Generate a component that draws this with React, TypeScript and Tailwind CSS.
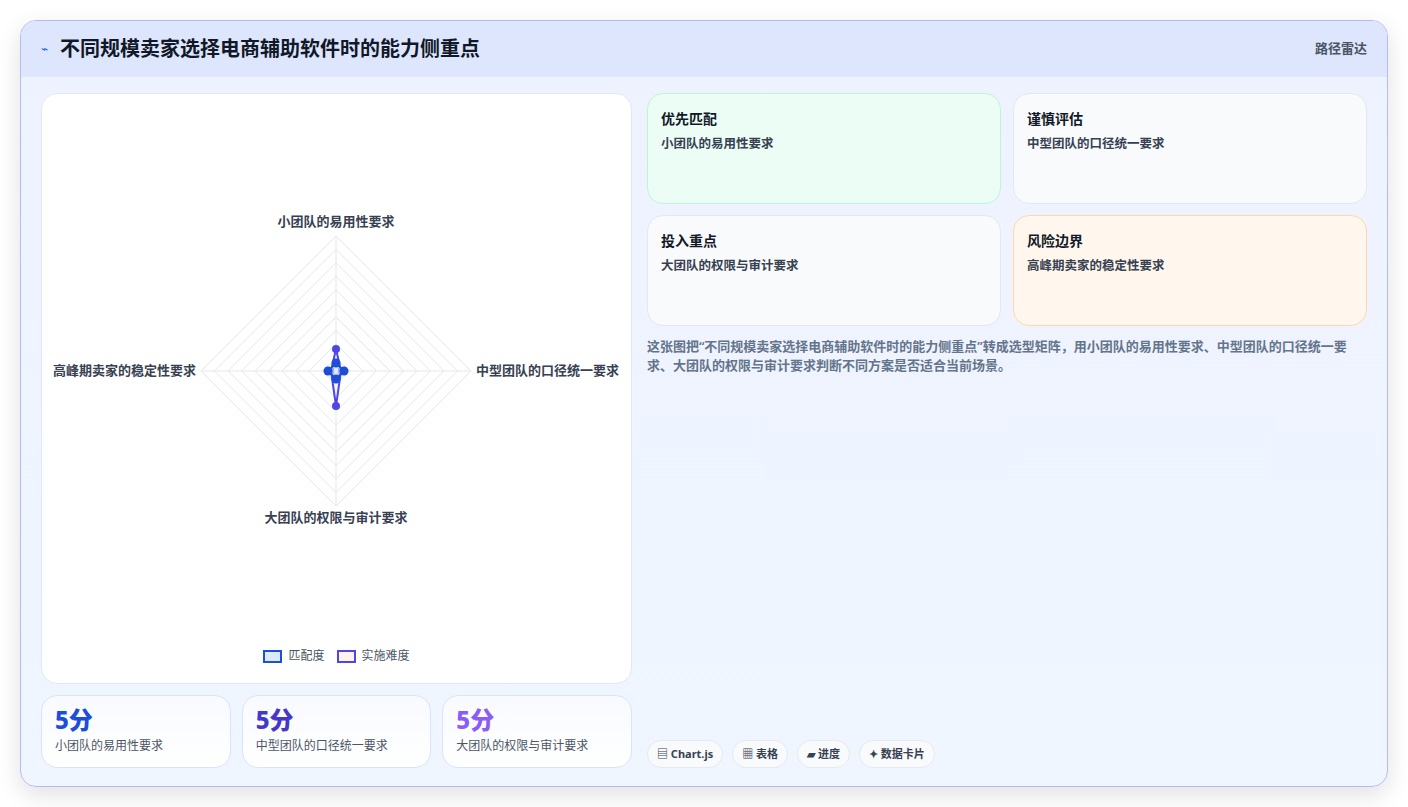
import React from "react";

const F = { fontFamily: '"Noto Sans", "Noto Sans CJK SC", sans-serif' };

function Radar() {
  const cx = 294, cy = 262, R = 135;
  const rings = Array.from({ length: 10 }, (_, i) => ((i + 1) / 10) * R);
  const dia = (r: number) => `${cx},${cy - r} ${cx + r},${cy} ${cx},${cy + r} ${cx - r},${cy}`;
  const purple = [22, 5, 35, 5];
  const blue = [8, 8, 8, 8];
  const pts = (v: number[]) => [[cx, cy - v[0]], [cx + v[1], cy], [cx, cy + v[2]], [cx - v[3], cy]];
  return (
    <svg width="590" height="525" className="block">
      {rings.map((r, i) => (
        <polygon key={i} points={dia(r)} fill="none" stroke="#e5e7eb" strokeWidth="1" />
      ))}
      <line x1={cx} y1={cy - R} x2={cx} y2={cy + R} stroke="#e5e7eb" />
      <line x1={cx - R} y1={cy} x2={cx + R} y2={cy} stroke="#e5e7eb" />
      <polygon points={pts(purple).map(p => p.join(",")).join(" ")} fill="rgba(253,237,230,0.5)" stroke="#4f46e5" strokeWidth="2" />
      {pts(purple).map((p, i) => <circle key={i} cx={p[0]} cy={p[1]} r="4" fill="#4f46e5" />)}
      <polygon points={pts(blue).map(p => p.join(",")).join(" ")} fill="rgba(219,234,254,0.6)" stroke="#1d4ed8" strokeWidth="2" />
      {pts(blue).map((p, i) => <circle key={i} cx={p[0]} cy={p[1]} r="4.5" fill="#1d4ed8" />)}
      <rect x={cx - 2} y={cy - 2} width="4" height="4" fill="#dbeafe" />
      <g fontSize="13" fontWeight="600" fill="#374151" style={F}>
        <text x={cx} y={cy - R - 14} textAnchor="middle" dominantBaseline="middle">小团队的易用性要求</text>
        <text x={cx} y={cy + R + 12} textAnchor="middle" dominantBaseline="middle">大团队的权限与审计要求</text>
        <text x={cx - R - 5} y={cy} textAnchor="end" dominantBaseline="middle">高峰期卖家的稳定性要求</text>
        <text x={cx + R + 5} y={cy} textAnchor="start" dominantBaseline="middle">中型团队的口径统一要求</text>
      </g>
    </svg>
  );
}

const cards = [
  { t: "优先匹配", d: "小团队的易用性要求", c: "bg-[#ecfdf5] border-[#bbf7d0]" },
  { t: "谨慎评估", d: "中型团队的口径统一要求", c: "bg-[#f8fafc] border-[#e2e8f0]" },
  { t: "投入重点", d: "大团队的权限与审计要求", c: "bg-[#f8fafc] border-[#e2e8f0]" },
  { t: "风险边界", d: "高峰期卖家的稳定性要求", c: "bg-[#fff7ed] border-[#fed7aa]" },
];

const stats = [
  { c: "text-[#1d4ed8]", d: "小团队的易用性要求" },
  { c: "text-[#4338ca]", d: "中型团队的口径统一要求" },
  { c: "text-[#8b5cf6]", d: "大团队的权限与审计要求" },
];

export default function App() {
  return (
    <div className="w-[1408px] h-[807px] bg-white p-5" style={F}>
      <div className="h-[767px] rounded-2xl border border-[#b4bdf0] bg-gradient-to-b from-[#eef2ff] to-[#eff6ff] shadow-[0_8px_24px_rgba(0,0,0,0.12)] overflow-hidden flex flex-col">
        <div className="h-[56px] shrink-0 bg-[#dde6fd] flex items-center justify-between pl-5 pr-5">
          <div className="flex items-center gap-3">
            <span className="text-[#2563eb] text-xs">⌁</span>
            <span className="text-[20px] font-bold text-[#111827]">不同规模卖家选择电商辅助软件时的能力侧重点</span>
          </div>
          <span className="text-[13px] font-semibold text-[#4b5563]">路径雷达</span>
        </div>
        <div className="flex-1 flex gap-[15px] px-5 pt-[16px] pb-[18px]">
          <div className="w-[591px] flex flex-col gap-[11px]">
            <div className="h-[591px] bg-white rounded-2xl border border-[#e0e7f5] flex flex-col">
              <div className="pt-[15px]"><Radar /></div>
              <div className="flex-1 flex items-start justify-center gap-2 text-[12px] text-[#4b5563] pt-[13px]">
                <span className="flex items-center gap-1.5"><span className="w-[19px] h-[13px] border-2 border-[#1d4ed8] bg-[#dbeafe]" />匹配度</span>
                <span className="flex items-center gap-1.5 ml-1"><span className="w-[19px] h-[13px] border-2 border-[#4f46e5] bg-[#fdf2ee]" />实施难度</span>
              </div>
            </div>
            <div className="grid grid-cols-3 gap-[11px] h-[73px]">
              {stats.map((s, i) => (
                <div key={i} className="rounded-2xl border border-[#dbe4f5] bg-gradient-to-b from-[#f8faff] to-white px-[13px] pt-[9px]">
                  <div className={`text-[24px] leading-[30px] font-extrabold ${s.c}`}>5分</div>
                  <div className="text-[12px] text-[#4b5563] mt-[2px]">{s.d}</div>
                </div>
              ))}
            </div>
          </div>
          <div className="flex-1 flex flex-col">
            <div className="grid grid-cols-2 gap-x-[12px] gap-y-[11px]">
              {cards.map((c, i) => (
                <div key={i} className={`h-[111px] rounded-2xl border ${c.c} px-[13px] pt-[14px]`}>
                  <div className="text-[14px] font-bold text-[#111827]">{c.t}</div>
                  <div className="text-[12.5px] font-semibold text-[#374151] mt-[6px]">{c.d}</div>
                </div>
              ))}
            </div>
            <p className="text-[13px] font-semibold text-[#64748b] leading-[19px] mt-[11px] pr-2">
              这张图把“不同规模卖家选择电商辅助软件时的能力侧重点”转成选型矩阵，用小团队的易用性要求、中型团队的口径统一要求、大团队的权限与审计要求判断不同方案是否适合当前场景。
            </p>
            <div className="mt-auto flex gap-[9px]">
              {["▤ Chart.js", "▦ 表格", "▰ 进度", "✦ 数据卡片"].map(t => (
                <span key={t} className="h-[28px] px-[9px] rounded-full bg-[#f8fafc] border border-[#e5e9f2] flex items-center text-[11px] font-bold text-[#374151]">{t}</span>
              ))}
            </div>
          </div>
        </div>
      </div>
    </div>
  );
}
